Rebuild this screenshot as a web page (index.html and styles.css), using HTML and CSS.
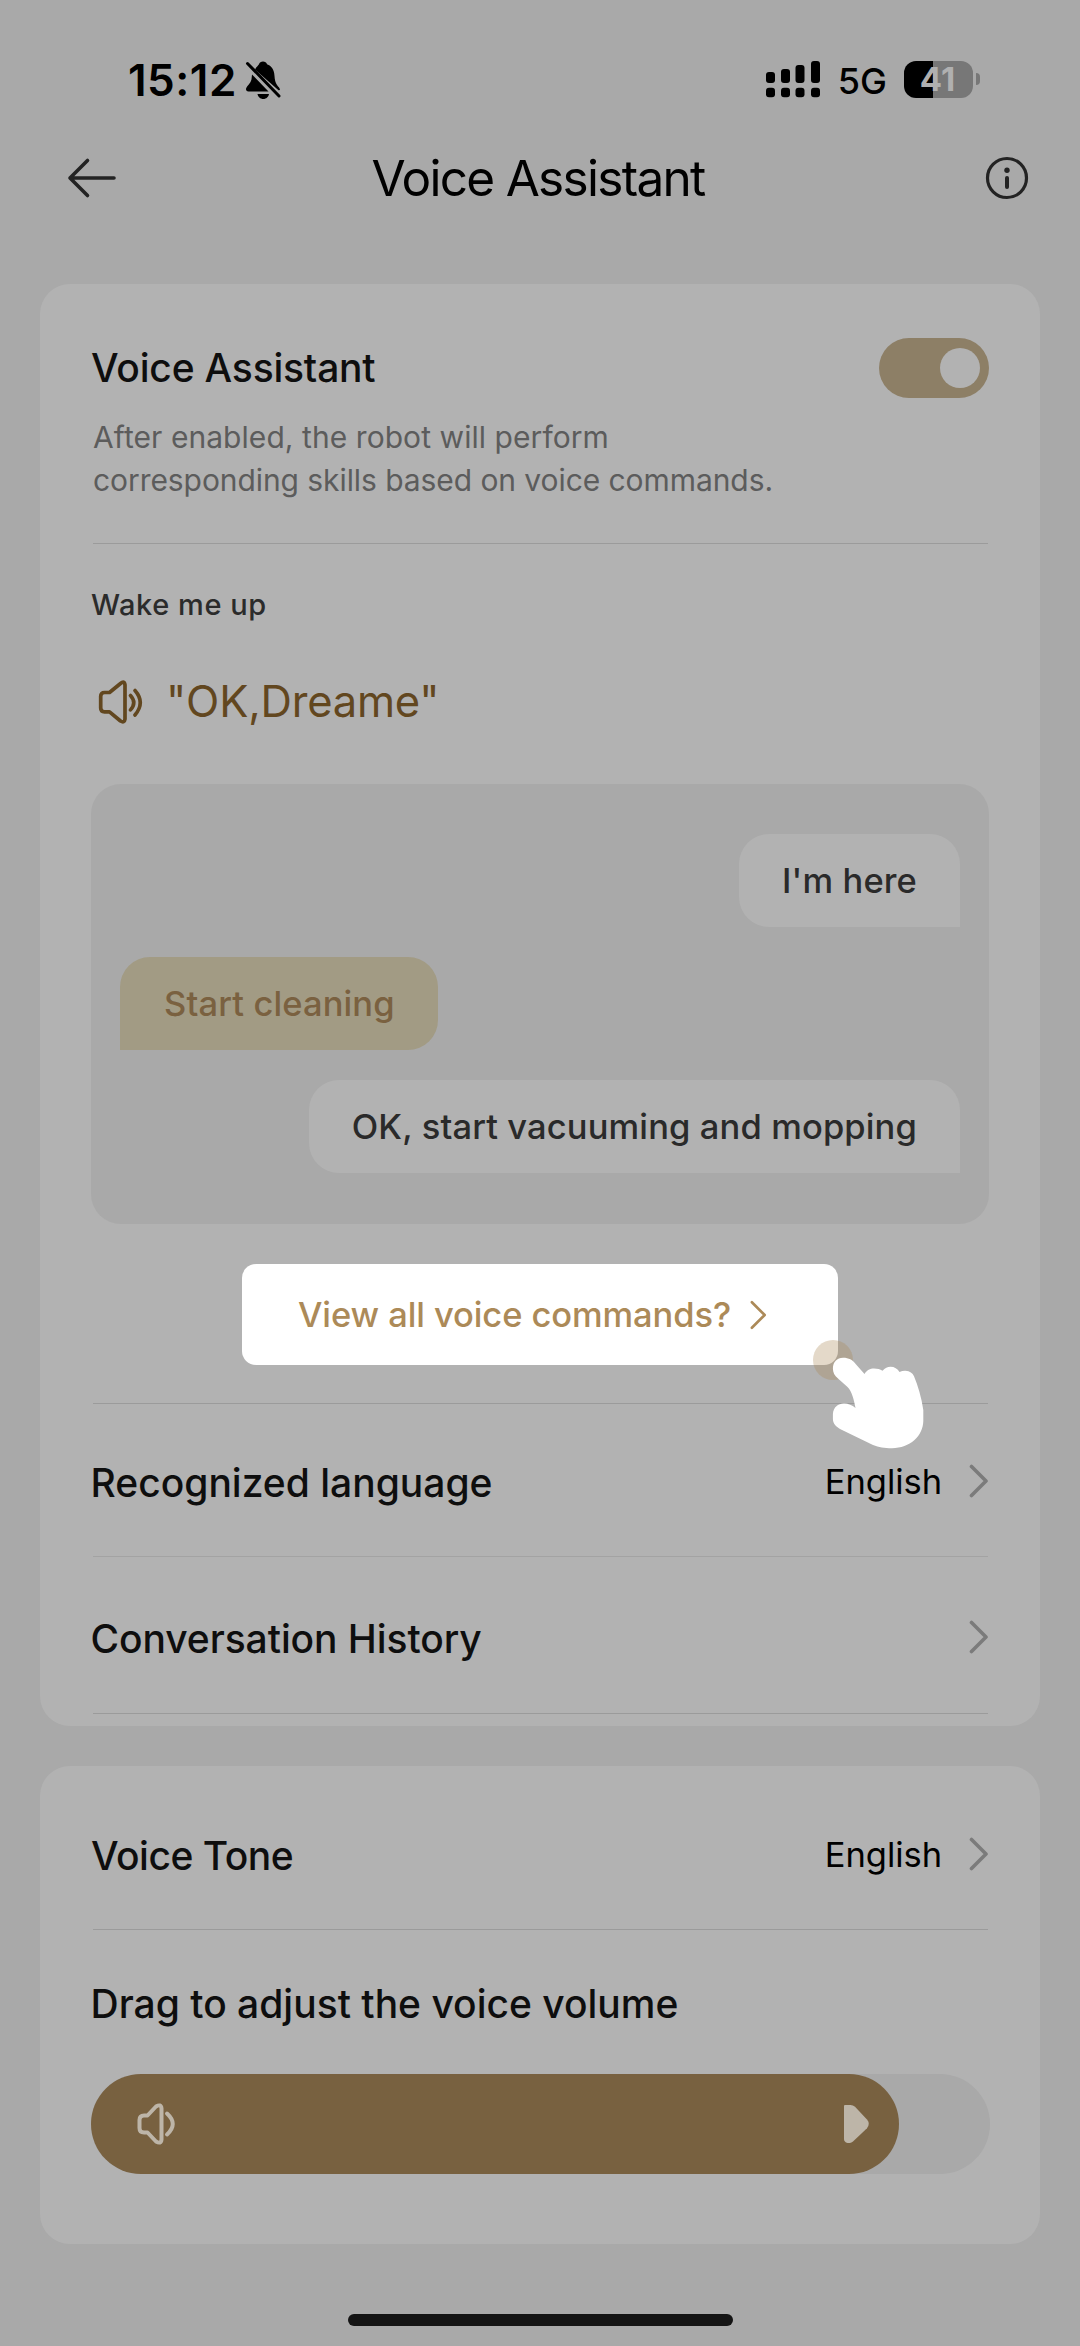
FILE: index.html
```html
<!DOCTYPE html>
<html lang="en">
<head>
<meta charset="utf-8">
<title>Voice Assistant</title>
<link rel="stylesheet" href="styles.css">
</head>
<body>
<svg class="defs" aria-hidden="true">
  <symbol id="chevron" viewBox="0 0 20 34">
    <path d="M2.5 2.5 17 17 2.5 31.5" fill="none" stroke="currentColor" stroke-linecap="round" stroke-linejoin="round"/>
  </symbol>
</svg>

<div class="status">
  <div class="status-left">
    <span class="time">15:12</span>
    <svg class="bell" viewBox="0 0 36 40">
      <path d="M10 9.5C11.5 6.5 13.5 5.2 14 4.2 14.5 2.4 16 1.5 18 1.5s3.500.9 4 2.700C26.500 6 29 9 29.500 16c.3 4 .8 6.500 2.500 9 1.500 2.200 3 3 3 5l-1.500.3zM7 14.500 23.500 31.500H3.500C1.800 31.500 1 30.500 1 29.300c0-3 4.500-5 5.500-10zM12.500 34H24c-.4 2.800-2.700 5-5.700 5s-5.400-2.200-5.800-5z"/>
      <path d="M2.500 3.500 34 36" fill="none" stroke="#000" stroke-width="3" stroke-linecap="round"/>
    </svg>
  </div>
  <div class="status-right">
    <svg class="signal" viewBox="0 0 54 37">
      <rect x="0" y="11" width="9" height="11" rx="3"/><rect x="15" y="8" width="9" height="14" rx="3"/><rect x="29.500" y="4" width="9" height="18" rx="3"/><rect x="45" y="0" width="9" height="22" rx="3"/>
      <rect x="0" y="26.700" width="9" height="9.600" rx="3"/><rect x="15" y="26.700" width="9" height="9.600" rx="3"/><rect x="29.500" y="26.700" width="9" height="9.600" rx="3"/><rect x="45" y="26.700" width="9" height="9.600" rx="3"/>
    </svg>
    <span class="network">5G</span>
    <div class="battery"><div class="battery-body">41</div><div class="battery-nub"></div></div>
  </div>
</div>

<header class="header">
  <svg class="back" viewBox="0 0 50 42">
    <path d="M21.500 3.500 4 21l17.500 17.500M4 21h44" fill="none" stroke="#232323" stroke-width="3.600" stroke-linecap="round" stroke-linejoin="round"/>
  </svg>
  <h1 class="title">Voice Assistant</h1>
  <svg class="info" viewBox="0 0 44 44">
    <circle cx="22" cy="22" r="19.500" fill="none" stroke="#232323" stroke-width="3.200"/>
    <circle cx="22" cy="14.200" r="2.700" fill="#232323"/>
    <path d="M22 22v9" stroke="#232323" stroke-width="4" stroke-linecap="round"/>
  </svg>
</header>

<main>
  <section class="card">
    <div class="switch-row">
      <h2 class="label lead">Voice Assistant</h2>
      <div class="toggle"><div class="knob"></div></div>
    </div>
    <p class="desc">After enabled, the robot will perform<br><span class="desc-tail">corresponding skills based on voice commands.</span></p>
    <hr class="line desc-line">
    <p class="wake">Wake me up</p>
    <div class="phrase">
      <svg class="speaker" viewBox="0 0 48 44">
        <path d="M12.500 12.500H7.500Q3.700 12.500 3.700 16.300V28Q3.700 31.800 7.500 31.800H12.500L23.500 41Q27.500 43.300 28 39V5Q27.500.2 23.500 3.500Z" fill="none" stroke="currentColor" stroke-width="3.700" stroke-linejoin="round"/>
        <path d="M33.500 15.500q6.500 7.200 0 14.400M38 10.500q10.500 12 0 24.500" fill="none" stroke="currentColor" stroke-width="3.600" stroke-linecap="round"/>
      </svg>
      <span class="phrase-text">"OK,Dreame"</span>
    </div>
    <div class="chat">
      <div class="bubble reply">I'm here</div>
      <div class="bubble command">Start cleaning</div>
      <div class="bubble reply">OK, start vacuuming and mopping</div>
    </div>
    <div class="spotlight">
      <span>View all voice commands?</span>
      <svg class="link-chevron"><use href="#chevron"/></svg>
      <div class="tap"></div>
      <svg class="hand" viewBox="0 0 92 92">
        <path d="M11 .7C17 .7 20.500 3 23 6.200L32.500 17C35 13 38 11.500 42 11.500c3.500 0 6 .7 8.500 2.300C53 10.700 55.500 9.700 58.500 9.700c4 0 7 2 9 5.200 2-.9 4-1.300 6-1.200 4.500.2 7 2.300 8.500 5.500C86 29 89.500 40 91.300 53v11C91 79 78 91 60 91.200 52 91.200 47 90.500 41 88L9 72.500C4 69.500 1 67 .9 62v-5C1.500 50 6 46.500 12 46.500c4.500 0 8 1.500 11.500 4.500C22 43 20 34.500 15.500 30L6 21.500C2.500 18.500.9 15.500.9 11.500.9 5 5 .7 11 .7z" fill="#fff"/>
      </svg>
    </div>
    <hr class="line">
    <div class="row row-language">
      <span class="label">Recognized language</span>
      <span class="value">English</span>
      <svg class="chevron"><use href="#chevron"/></svg>
    </div>
    <hr class="line faint">
    <div class="row row-history">
      <span class="label history">Conversation History</span>
      <svg class="chevron"><use href="#chevron"/></svg>
    </div>
    <hr class="line">
  </section>

  <section class="card tone-card">
    <div class="row row-tone">
      <span class="label tone">Voice Tone</span>
      <span class="value">English</span>
      <svg class="chevron"><use href="#chevron"/></svg>
    </div>
    <hr class="line">
    <p class="label volume-label">Drag to adjust the voice volume</p>
    <div class="slider">
      <div class="fill">
        <svg class="volume-icon" viewBox="0 0 40 42">
          <path d="M11.500 12.500H8Q3.500 12.500 3.500 17V25Q3.500 29.500 8 29.500H11.500L20 38.500Q25 41.500 25.500 36.500V5.500Q25 .5 20 3.500Z" fill="none" stroke="currentColor" stroke-width="4" stroke-linejoin="round"/>
          <path d="M31 10.500q11.500 10.500 0 21" fill="none" stroke="currentColor" stroke-width="4" stroke-linecap="round"/>
        </svg>
        <svg class="thumb" viewBox="0 0 25 38">
          <path d="M0 1Q0 0 1 0H6.500Q9 0 11 1.800L23 14.500Q26.500 18.800 23 23.200L9 36.500Q6.500 38.500 3.500 38 0 37 0 34Z" fill="currentColor"/>
        </svg>
      </div>
    </div>
  </section>
</main>
<div class="home"></div>
</body>
</html>
```
FILE: styles.css
```css
* { box-sizing: border-box; margin: 0; padding: 0; }
body {
  width: 1080px;
  height: 2346px;
  overflow: hidden;
  background: #a9a9a9;
  color: #000;
  font-family: Inter, "Liberation Sans", sans-serif;
}
svg { display: block; flex: none; }
.defs { position: absolute; width: 0; height: 0; }

.status {
  display: flex;
  justify-content: space-between;
  height: 100px;
  padding: 60px 100px 0 128px;
}
.status-left, .status-right { display: flex; align-items: center; height: 40px; }
.time { font-size: 44px; font-weight: 600; letter-spacing: .5px; }
.bell { width: 36px; height: 40px; margin-left: 8px; }
.signal { width: 54px; height: 37px; margin-bottom: 2px; }
.network { margin: 2px 17px 0 18px; font-size: 36px; font-weight: 450; letter-spacing: 0; line-height: 40px; }
.battery { display: flex; align-items: center; gap: 3px; margin: 0 0 2px; }
.battery-body {
  width: 69px;
  height: 37px;
  padding-right: 2px;
  border-radius: 12px;
  background: linear-gradient(90deg, #000 29px, #777 29px);
  color: #b0b0b0;
  font-size: 33px;
  font-weight: 700;
  line-height: 36px;
  text-align: center;
}
.battery-nub { width: 4px; height: 12px; border-radius: 0 6px 6px 0; background: #777; }

.header {
  display: flex;
  align-items: center;
  justify-content: space-between;
  height: 156px;
  padding: 0 51px 0 66px;
}
.back { width: 50px; height: 42px; }
.title { margin-right: 25px; font-size: 49.5px; font-weight: 400; letter-spacing: -1.7px; }
.info { width: 44px; height: 44px; }

.card { margin: 28px 40px 0; padding: 53px 51px 12px; border-radius: 30px; background: #b2b2b2; }
.switch-row { display: flex; align-items: center; justify-content: space-between; height: 62px; }
.label { margin-left: -.5px; color: #0e0e0e; font-size: 39px; font-weight: 500; line-height: 50px; }
.lead { margin-left: 0; letter-spacing: -.2px; }
.tone { margin-left: 0; letter-spacing: -.5px; }
.history { letter-spacing: -.08px; }
.toggle {
  display: flex;
  align-items: center;
  justify-content: flex-end;
  width: 110px;
  height: 60px;
  padding-right: 9px;
  border-radius: 30px;
  background: #8d7f66;
}
.knob { width: 40px; height: 40px; border-radius: 50%; background: #b2b2b2; }
.desc { margin: 17px 0 0 2px; color: #5c5c5c; font-size: 30px; letter-spacing: .06px; line-height: 43px; }
.desc-tail { letter-spacing: -.07px; }
.line { height: 1px; margin: 0 1px 0 2px; border: 0; background: #9b9b9b; }
.faint { background: #a3a3a3; }
.desc-line { margin-top: 41px; }
.wake { margin: 41px 0 0; color: #2b2b2b; font-size: 29px; font-weight: 500; letter-spacing: .55px; line-height: 40px; }
.phrase {
  display: flex;
  align-items: center;
  gap: 21px;
  height: 60px;
  margin: 47px 0 52px 6px;
  color: #62471f;
  font-size: 43.5px;
}
.phrase-text { margin-top: -2px; letter-spacing: -.2px; }
.speaker { width: 48px; height: 44px; }

.chat {
  display: flex;
  flex-direction: column;
  gap: 30px;
  height: 440px;
  padding: 50px 29px;
  border-radius: 30px;
  background: #a9a9a9;
}
.bubble {
  height: 93px;
  padding: 0 43px;
  font-size: 34.5px;
  font-weight: 500;
  letter-spacing: .12px;
  line-height: 93px;
}
.reply { align-self: flex-end; border-radius: 30px 30px 0 30px; background: #b2b2b2; color: #2a2a2a; }
.command { align-self: flex-start; padding: 0 43px 0 44px; border-radius: 30px 30px 30px 0; background: #a29b84; color: #7a6140; }

.spotlight {
  position: relative;
  display: flex;
  align-items: center;
  width: 596px;
  height: 101px;
  margin: 40px 0 38px 151px;
  padding-left: 56px;
  border-radius: 14px;
  background: #fff;
  color: #ac8a58;
  font-size: 34.5px;
  font-weight: 500;
  letter-spacing: -.1px;
}
.link-chevron { width: 19px; height: 30px; margin-left: 18px; stroke-width: 3px; }
.tap {
  position: absolute;
  left: 571px;
  top: 76px;
  width: 40px;
  height: 40px;
  border-radius: 50%;
  background: rgba(172, 138, 88, .32);
}
.hand { position: absolute; left: 590px; top: 93px; width: 92px; height: 92px; }

.row { display: flex; align-items: center; }
.row .label { flex: 1; margin-top: 3px; }
.row-language { height: 152px; padding-top: 2px; }
.row-history { height: 156px; padding-top: 4px; }
.row-tone { height: 163px; padding-top: 13px; }
.value { margin-right: 27px; font-size: 34.5px; letter-spacing: -.05px; }
.chevron { width: 20px; height: 34px; color: #7b7b7b; stroke-width: 3.6px; }

.tone-card { margin-top: 40px; padding: 0 51px 70px; }
.volume-label { margin-top: 49px; }
.slider { height: 100px; margin: 45px -.5px 0 0; border-radius: 50px; background: #a9a9a9; }
.fill {
  display: flex;
  align-items: center;
  justify-content: space-between;
  width: 808px;
  height: 100px;
  padding: 0 30px 0 45px;
  border-radius: 50px;
  background: #786140;
  color: #bdb5a8;
}
.volume-icon { width: 40px; height: 42px; }
.thumb { width: 25px; height: 38px; }
.home { width: 385px; height: 12px; margin: 70px 0 0 348px; border-radius: 6px; background: #141414; }
```
